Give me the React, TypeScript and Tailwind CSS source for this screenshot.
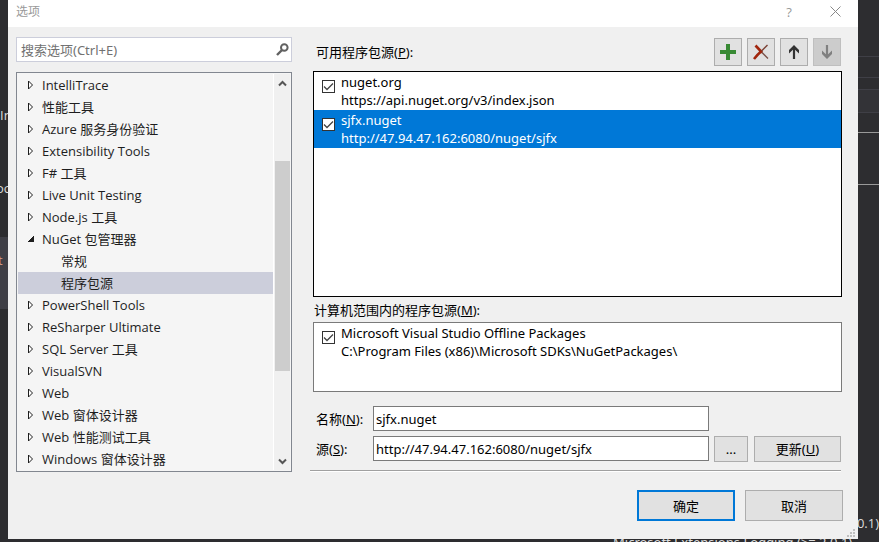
import React from "react";

const tree: { label: string; kind: "closed" | "open" | "child"; selected?: boolean }[] = [
  { label: "IntelliTrace", kind: "closed" },
  { label: "性能工具", kind: "closed" },
  { label: "Azure 服务身份验证", kind: "closed" },
  { label: "Extensibility Tools", kind: "closed" },
  { label: "F# 工具", kind: "closed" },
  { label: "Live Unit Testing", kind: "closed" },
  { label: "Node.js 工具", kind: "closed" },
  { label: "NuGet 包管理器", kind: "open" },
  { label: "常规", kind: "child" },
  { label: "程序包源", kind: "child", selected: true },
  { label: "PowerShell Tools", kind: "closed" },
  { label: "ReSharper Ultimate", kind: "closed" },
  { label: "SQL Server 工具", kind: "closed" },
  { label: "VisualSVN", kind: "closed" },
  { label: "Web", kind: "closed" },
  { label: "Web 窗体设计器", kind: "closed" },
  { label: "Web 性能测试工具", kind: "closed" },
  { label: "Windows 窗体设计器", kind: "closed" },
];

function Twisty({ open }: { open: boolean }) {
  return (
    <svg width="10" height="12" viewBox="0 0 10 12" className="shrink-0" shapeRendering={open ? "crispEdges" : "auto"}>
      {open ? (
        <path d="M7 2v7H0z" fill="#1e1e1e" />
      ) : (
        <path d="M1.5 2v8L5.5 6z" fill="#fff" stroke="#1e1e1e" />
      )}
    </svg>
  );
}

function ScrollArrow({ d }: { d: string }) {
  return (
    <svg width="9" height="7" viewBox="0 0 9 7" fill="none" stroke="#555" strokeWidth="2">
      <path d={d} />
    </svg>
  );
}

function Source({ name, url, selected }: { name: string; url: string; selected?: boolean }) {
  return (
    <label className={`flex h-[38px] gap-[6px] pt-px pl-2 leading-[18px] ${selected ? "bg-[#0078d7] text-white" : ""}`}>
      <span className="relative mt-[7px] h-[13px] w-[13px] shrink-0">
        <input type="checkbox" defaultChecked className="block h-[13px] w-[13px] appearance-none border border-[#333] bg-white" />
        <svg className="pointer-events-none absolute inset-0" width="13" height="13" viewBox="0 0 13 13" fill="none" stroke="#444" strokeWidth="1.3">
          <path d="M2 6.5l3 3L11 3.5" />
        </svg>
      </span>
      <span className="min-w-0 whitespace-nowrap">
        <span className="block">{name}</span>
        <span className="block">{url}</span>
      </span>
    </label>
  );
}

function ToolButton({ label, disabled, children }: { label: string; disabled?: boolean; children: React.ReactNode }) {
  return (
    <button
      type="button"
      aria-label={label}
      disabled={disabled}
      className="flex h-7 w-7 items-center justify-center border border-[#adadad] bg-[#e1e1e1] disabled:border-[#bfbfbf] disabled:bg-[#cccccc]"
    >
      {children}
    </button>
  );
}

const arrowUp = "M8 1L3 6V9.5L6.9 5.8V15H9.1V5.8L13 9.5V6z";
const grip = [
  [6, 0],
  [3, 3],
  [6, 3],
  [0, 6],
  [3, 6],
  [6, 6],
];

export default function App() {
  return (
    <div className="relative min-h-screen overflow-hidden bg-[#2d2d30] pr-[21px] pb-[3px] pl-2 font-['Open_Sans','Noto_Sans_CJK_SC',sans-serif] text-[13px] leading-[18px] text-black">
      <div className="absolute top-[106px] left-0 text-[#dcdcdc]">In</div>
      <div className="absolute top-[179px] -left-1 text-[#dcdcdc]">oc</div>
      <div className="absolute top-[237px] left-0 h-[72px] w-2 bg-[#3f3f46]" />
      <div className="absolute top-[251px] -left-0.5 text-[#d69d85]">t</div>
      <div className="absolute top-[56px] right-0 h-[22px] w-[21px] border-y border-[#3f3f46]" />
      <div className="absolute top-[89px] right-0 h-6 w-[21px] border-y border-[#3f3f46] bg-[#333337]" />
      <div className="absolute top-[132px] right-0 h-px w-[21px] bg-[#999]" />
      <div className="absolute top-[184px] right-0 h-px w-[21px] bg-[#999]" />
      <div className="absolute top-[514px] right-0 text-[#dcdcdc]">0.1)</div>
      <div className="absolute top-[533px] left-[613px] font-['Noto_Sans',sans-serif] whitespace-nowrap text-[#dcdcdc]">
        Microsoft.Extensions.Logging (&gt;= 2.0.1)
      </div>

      <main className="relative flex min-h-[539px] flex-col bg-[#f0f0f0]">
        <header className="flex h-[27px] items-center bg-white pl-2 text-[12px] text-[#999]">
          <h1 className="mb-1 flex-1">选项</h1>
          <button type="button" aria-label="帮助" className="mb-1 w-[46px] text-center text-[13px]">?</button>
          <button type="button" aria-label="关闭" className="mb-1 flex w-[46px] justify-center">
            <svg width="11" height="11" viewBox="0 0 11 11" stroke="#888" strokeWidth="1">
              <path d="M.5 .5l10 10M10.5 .5l-10 10" />
            </svg>
          </button>
        </header>

        <div className="flex gap-[18px] pt-[10px] pr-4 pl-2">
          <aside className="w-[276px] shrink-0">
            <div className="flex h-[25px] items-center border border-[#cccedb] bg-white pr-[2px] pl-1">
              <input
                type="search"
                aria-label="搜索选项"
                placeholder="搜索选项(Ctrl+E)"
                className="min-w-0 flex-1 bg-transparent font-['Noto_Sans','Noto_Sans_CJK_SC',sans-serif] outline-none placeholder:text-[#717171]"
              />
              <svg width="13" height="13" viewBox="0 0 13 13" fill="none" stroke="#616161">
                <circle cx="8.3" cy="4.5" r="3.3" strokeWidth="2" />
                <path d="M6 7L1 12" strokeWidth="2.4" />
              </svg>
            </div>

            <div className="mt-[10px] flex border border-[#828790] bg-[#f5f5f5] p-px text-[#1e1e1e]">
              <ul role="tree" className="flex-1">
                {tree.map((t) => (
                  <li
                    key={t.label}
                    role="treeitem"
                    aria-selected={!!t.selected}
                    className={`flex h-[22px] items-center ${t.kind === "child" ? "pl-[43px]" : "gap-[5px] pl-[9px]"} ${t.selected ? "bg-[#cccedb]" : ""}`}
                  >
                    {t.kind !== "child" && <Twisty open={t.kind === "open"} />}
                    <span>{t.label}</span>
                  </li>
                ))}
              </ul>
              <div className="flex w-[17px] flex-col items-center border-l border-white bg-[#f0f0f0] pt-[6px] pb-[5px]">
                <ScrollArrow d="M1 5.5l3.5-3.5L8 5.5" />
                <div className="mt-[74px] h-[210px] w-[15px] bg-[#cdcdcd]" />
                <div className="flex-1" />
                <ScrollArrow d="M1 1.5L4.5 5L8 1.5" />
              </div>
            </div>
          </aside>

          <section className="min-w-0 flex-1 pt-px font-['Noto_Sans','Noto_Sans_CJK_SC',sans-serif]">
            <div className="flex items-center gap-[5px] pr-px pl-[6px]">
              <h2 className="flex-1">可用程序包源(<u>P</u>):</h2>
              <ToolButton label="添加">
                <svg width="18" height="18" viewBox="0 0 18 18">
                  <path d="M7 1h4v6h6v4h-6v6H7v-6H1V7h6z" fill="#388a34" />
                </svg>
              </ToolButton>
              <ToolButton label="删除">
                <svg width="18" height="18" viewBox="0 0 18 18" fill="none">
                  <path d="M3.5 2.5L10 9.5" stroke="#a1260d" strokeWidth="2.6" />
                  <path d="M9 8.5L16 15.5" stroke="#7a5048" strokeWidth="1.3" />
                  <path d="M15.5 2L9 8.5" stroke="#7a4034" strokeWidth="1.5" />
                  <path d="M9.5 8Q6 11 2 16" stroke="#a1260d" strokeWidth="2.6" />
                </svg>
              </ToolButton>
              <ToolButton label="上移">
                <svg width="16" height="16" viewBox="0 0 16 16" fill="#333"><path d={arrowUp} /></svg>
              </ToolButton>
              <ToolButton label="下移" disabled>
                <svg width="16" height="16" viewBox="0 0 16 16" fill="#808080"><path d={arrowUp} transform="rotate(180 8 8)" /></svg>
              </ToolButton>
            </div>

            <div className="mt-[5px] ml-[3px] h-[226px] border border-black bg-white">
              <Source name="nuget.org" url="https://api.nuget.org/v3/index.json" />
              <Source name="sjfx.nuget" url="http://47.94.47.162:6080/nuget/sjfx" selected />
            </div>

            <h2 className="mt-1 ml-1">计算机范围内的程序包源(<u>M</u>):</h2>
            <div className="mt-[3px] ml-[3px] h-[70px] border border-[#7a7a7a] bg-white">
              <Source name="Microsoft Visual Studio Offline Packages" url="C:\Program Files (x86)\Microsoft SDKs\NuGetPackages\" />
            </div>

            <form className="mt-[14px] grid grid-cols-[57px_1fr_39px_93px] gap-y-[5px] pr-px pl-[6px]">
              <label htmlFor="name" className="self-center">名称(<u>N</u>):</label>
              <input id="name" defaultValue="sjfx.nuget" className="h-[25px] min-w-0 border border-[#7a7a7a] bg-white px-[2px] outline-none" />
              <span className="col-span-2" />
              <label htmlFor="source" className="self-center">源(<u>S</u>):</label>
              <input id="source" defaultValue="http://47.94.47.162:6080/nuget/sjfx" className="h-[25px] min-w-0 border border-[#7a7a7a] bg-white px-[2px] outline-none" />
              <button type="button" className="ml-[5px] h-[26px] border border-[#adadad] bg-[#e1e1e1]">...</button>
              <button type="button" className="ml-[6px] h-[26px] border border-[#adadad] bg-[#e1e1e1]">更新(<u>U</u>)</button>
            </form>
            <hr className="mt-2 mr-px h-[2px] border-t border-b border-t-[#a0a0a0] border-b-white" />
          </section>
        </div>

        <footer className="mt-[18px] mb-[18px] flex justify-end gap-[10px] pr-[15px]">
          <button type="button" className="h-[31px] w-[98px] border-2 border-[#0078d7] bg-[#e1e1e1]">确定</button>
          <button type="button" className="h-[31px] w-[98px] border border-[#adadad] bg-[#e1e1e1]">取消</button>
        </footer>
        <svg className="absolute right-[3px] bottom-[2px]" width="8" height="8" fill="#bfbfbf">
          {grip.map(([x, y]) => (
            <rect key={`${x}-${y}`} x={x} y={y} width="2" height="2" />
          ))}
        </svg>
      </main>
    </div>
  );
}
